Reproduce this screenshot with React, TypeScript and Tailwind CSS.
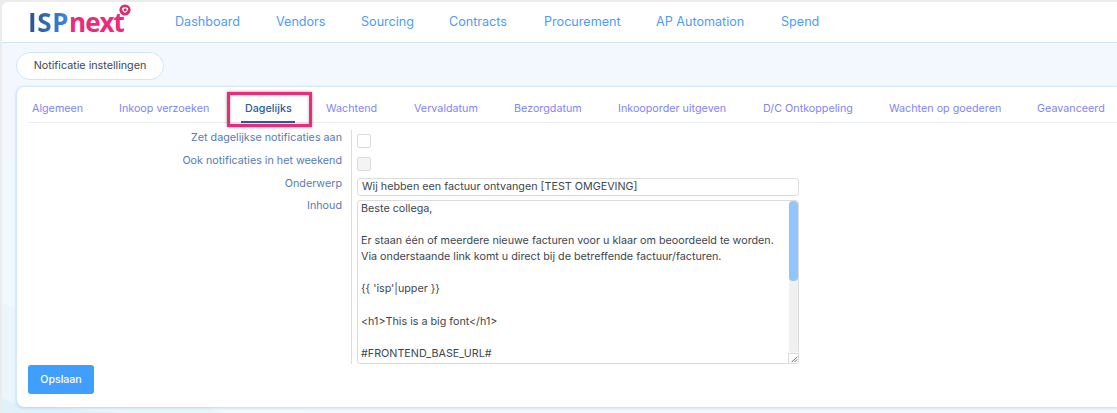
export default function App() {
  const nav = [
    ["Dashboard", "w-[101px]"],
    ["Vendors", "w-[85px]"],
    ["Sourcing", "w-[88px]"],
    ["Contracts", "w-[95px]"],
    ["Procurement", "w-[112px]"],
    ["AP Automation", "w-[125px]"],
    ["Spend", "w-[60px]"],
  ];
  const tabs = [
    ["Algemeen", "w-[87px]"],
    ["Inkoop verzoeken", "w-[126px]"],
    ["Dagelijks", "w-[81px]"],
    ["Wachtend", "w-[88px]"],
    ["Vervaldatum", "w-[100px]"],
    ["Bezorgdatum", "w-[104px]"],
    ["Inkooporder uitgeven", "w-[145px]"],
    ["D/C Ontkoppeling", "w-[126px]"],
    ["Wachten op goederen", "w-[148px]"],
    ["Geavanceerd", "w-[75px]"],
  ];
  const lines = [
    "Beste collega,",
    "",
    "Er staan één of meerdere nieuwe facturen voor u klaar om beoordeeld te worden.",
    "Via onderstaande link komt u direct bij de betreffende factuur/facturen.",
    "",
    "{{ 'isp'|upper }}",
    "",
    "<h1>This is a big font</h1>",
    "",
    "#FRONTEND_BASE_URL#",
  ];
  return (
    <div className="h-[413px] w-[1117px] overflow-hidden bg-[#ececec] pl-[2px] pt-[2px] font-['Inter',sans-serif] text-[10.75px]">
      <div className="relative h-[411px] w-[1115px] overflow-hidden rounded-tl-[6px] bg-[#f3f8fe]">
        <svg className="absolute left-0 top-0" width="1115" height="411" viewBox="0 0 1115 411">
          <polygon points="0,158 14,164 310,411 0,411" fill="#f0f9fd" />
          <polygon points="0,301 14,307 218,411 0,411" fill="#eaf6fc" />
          <polygon points="0,396 14,402 120,411 0,411" fill="#e1f1fa" />
        </svg>
        <div className="relative">
          <header className="flex h-[41px] items-center border-b border-[#cfe8f6] bg-white">
            <div className="relative ml-[26px] w-[147px] font-['Open_Sans',sans-serif] text-[26px] font-bold leading-[34px]">
              <span className="bg-gradient-to-r from-[#28528f] to-[#3a8ade] bg-clip-text tracking-[0.6px] text-transparent">ISP</span>
              <span className="tracking-[-1px] text-[#ee2a7b]">next</span>
              <svg className="absolute left-[91px] top-[-1px]" width="12" height="12" viewBox="0 0 12 12">
                <circle cx="6" cy="6" r="5.6" fill="#d92f6e" />
                <path d="M2.8 4.2 C4.5 3 7.5 3 9.2 4.2 C9 6.5 7.5 8.2 6 8.8 C4.5 8.2 3 6.5 2.8 4.2 Z" fill="#fff" />
                <circle cx="6.2" cy="5.8" r="1.5" fill="#d92f6e" />
              </svg>
            </div>
            {nav.map(([t, w]) => (
              <div key={t} className={`${w} text-[12.6px] text-[#4f9cf5]`}>{t}</div>
            ))}
          </header>
          <div className="ml-[14px] mt-[9px] flex h-[28px] w-[148px] items-center justify-center rounded-full border border-[#cfe6f8] bg-white text-[#3d4650]">
            Notificatie instellingen
          </div>
          <main className="ml-[14px] mt-[6px] h-[321px] w-[1101px] rounded-l-[8px] border-l border-t border-[#d5e9f8] bg-white shadow-[0_1px_3px_rgba(120,160,200,0.4)]">
            <nav className="ml-[11px] flex h-[36px] items-center border-b border-[#eceff2] pt-[10px]">
              {tabs.map(([t, w]) => (
                <div key={t} className={`relative h-[25px] ${w} pl-[4px] pt-[5px] leading-[14px] whitespace-nowrap ${t === "Dagelijks" ? "font-medium text-[#2b5c9e]" : "text-[#7f86f5]"}`}>
                  {t}
                  {t === "Dagelijks" && <span className="absolute bottom-[-1px] left-0 h-[2px] w-[54px] bg-[#2b5c9e]" />}
                </div>
              ))}
            </nav>
            <div className="mt-[7px] flex h-[234px]">
              <div className="w-[334px] pr-[9px] pt-[1px] text-right leading-[14px] text-[#5a7ab0]">
                <div className="mb-[9px] h-[14px]">Zet dagelijkse notificaties aan</div>
                <div className="mb-[9px] h-[14px]">Ook notificaties in het weekend</div>
                <div className="mb-[8px] h-[14px]">Onderwerp</div>
                <div className="h-[14px]">Inhoud</div>
              </div>
              <div className="w-[449px] border-l border-[#dcdcdc] pl-[5px]">
                <div className="mt-[4px] h-[14px] w-[14px] rounded-[2px] border border-[#dcdcdc] bg-white" />
                <div className="mt-[9px] h-[14px] w-[14px] rounded-[2px] border border-[#dcdcdc] bg-[#f4f4f4]" />
                <div className="mt-[7px] flex h-[18px] w-[442px] items-center rounded-[3px] border border-[#dcdcdc] px-[4px] text-[#3d4650]">
                  Wij hebben een factuur ontvangen [TEST OMGEVING]
                </div>
                <div className="relative mt-[4px] h-[164px] w-[442px] overflow-hidden rounded-[3px] border border-[#dcdcdc] pl-[3px] text-[#3d4650]">
                  {lines.map((l, i) => (
                    <div key={i} className="h-[16.1px] whitespace-pre leading-[16.1px]">{l}</div>
                  ))}
                  <div className="absolute right-0 top-0 h-[152px] w-[9px] rounded-[4px] bg-[#f0f0f0]">
                    <div className="h-[80px] rounded-[4px] bg-[#93c5fd]" />
                  </div>
                  <svg className="absolute bottom-0 right-0 border-l border-t border-[#dcdcdc]" width="10" height="10" viewBox="0 0 10 10">
                    <path d="M3 9 L9 3 M6 9 L9 6" stroke="#555" strokeWidth="1" />
                  </svg>
                </div>
              </div>
            </div>
            <button className="ml-[11px] mt-[1px] h-[29px] w-[66px] rounded-[3px] bg-[#409eff] text-[10.6px] font-medium text-white">Opslaan</button>
          </main>
          <div className="absolute left-[225px] top-[90px] h-[35px] w-[85px] border-[3px] border-[#ec2a7a] shadow-[0_0_3px_rgba(0,0,0,0.4),inset_0_0_3px_rgba(0,0,0,0.3)]" />
        </div>
      </div>
    </div>
  );
}
